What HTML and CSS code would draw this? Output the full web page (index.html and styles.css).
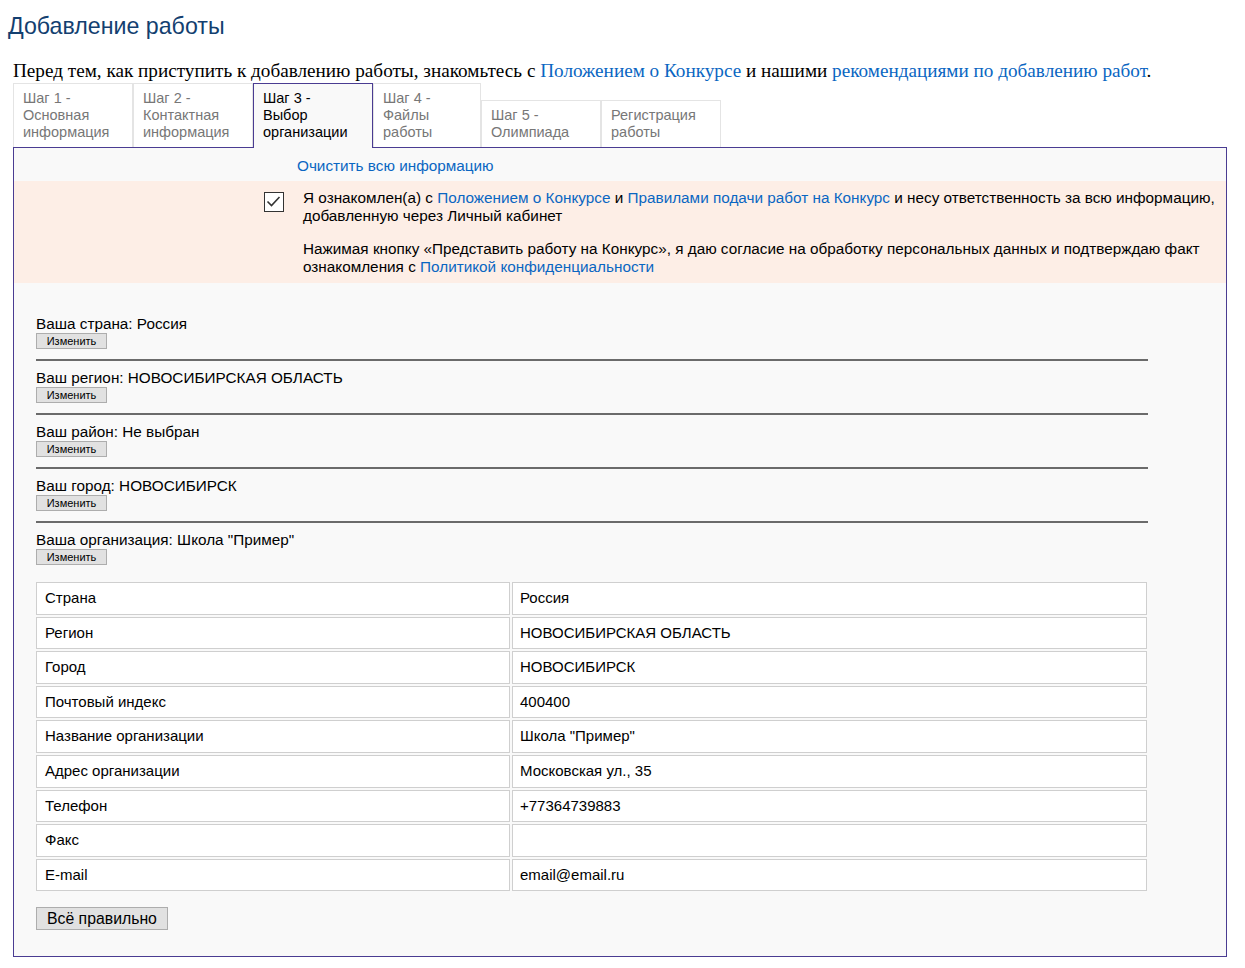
FILE: index.html
```html
<!DOCTYPE html>
<html lang="ru">
<head>
<meta charset="utf-8">
<title>Добавление работы</title>
<link rel="stylesheet" href="styles.css">
</head>
<body>
<h1 class="page-title">Добавление работы</h1>
<p class="intro">Перед тем, как приступить к добавлению работы, знакомьтесь с <a href="#">Положением о Конкурсе</a> и нашими <a href="#">рекомендациями по добавлению работ</a>.</p>
<div class="wizard">
  <ul class="tabs">
    <li class="tab">Шаг 1 -<br>Основная<br>информация</li>
    <li class="tab">Шаг 2 -<br>Контактная<br>информация</li>
    <li class="tab tab-active">Шаг 3 -<br>Выбор<br>организации</li>
    <li class="tab tab-narrow">Шаг 4 -<br>Файлы<br>работы</li>
    <li class="tab">Шаг 5 -<br>Олимпиада</li>
    <li class="tab">Регистрация<br>работы</li>
  </ul>
  <div class="panel">
    <div class="clear-row"><a href="#">Очистить всю информацию</a></div>
    <div class="agree">
      <span class="checkbox"><svg width="18" height="18" viewBox="0 0 18 18"><polyline points="2.5,8.5 6.5,12.5 14.5,4" fill="none" stroke="#333" stroke-width="1.6"/></svg></span>
      <div class="agree-text">
        <p>Я ознакомлен(а) с <a href="#">Положением о Конкурсе</a> и <a href="#">Правилами подачи работ на Конкурс</a> и несу ответственность за всю информацию, добавленную через Личный кабинет</p>
        <p>Нажимая кнопку «Представить работу на Конкурс», я даю согласие на обработку персональных данных и подтверждаю факт ознакомления с <a href="#">Политикой конфиденциальности</a></p>
      </div>
    </div>
    <div class="content">
      <div class="loc-item">
        <div class="loc-label">Ваша страна: Россия</div>
        <button class="btn-change">Изменить</button>
      </div>
      <div class="loc-item">
        <div class="loc-label">Ваш регион: НОВОСИБИРСКАЯ ОБЛАСТЬ</div>
        <button class="btn-change">Изменить</button>
      </div>
      <div class="loc-item">
        <div class="loc-label">Ваш район: Не выбран</div>
        <button class="btn-change">Изменить</button>
      </div>
      <div class="loc-item">
        <div class="loc-label">Ваш город: НОВОСИБИРСК</div>
        <button class="btn-change">Изменить</button>
      </div>
      <div class="loc-item loc-last">
        <div class="loc-label">Ваша организация: Школа "Пример"</div>
        <button class="btn-change">Изменить</button>
      </div>
      <table class="org-table">
        <tr><td class="c1">Страна</td><td class="c2">Россия</td></tr>
        <tr><td class="c1">Регион</td><td class="c2">НОВОСИБИРСКАЯ ОБЛАСТЬ</td></tr>
        <tr><td class="c1">Город</td><td class="c2">НОВОСИБИРСК</td></tr>
        <tr><td class="c1">Почтовый индекс</td><td class="c2">400400</td></tr>
        <tr><td class="c1">Название организации</td><td class="c2">Школа "Пример"</td></tr>
        <tr><td class="c1">Адрес организации</td><td class="c2">Московская ул., 35</td></tr>
        <tr><td class="c1">Телефон</td><td class="c2">+77364739883</td></tr>
        <tr><td class="c1">Факс</td><td class="c2"></td></tr>
        <tr><td class="c1">E-mail</td><td class="c2">email@email.ru</td></tr>
      </table>
      <button class="btn-ok">Всё правильно</button>
    </div>
  </div>
</div>
</body>
</html>
```
FILE: styles.css
```css
html, body {
  margin: 0;
  padding: 0;
  background: #fff;
}
body {
  font-family: "Liberation Sans", Arial, sans-serif;
  color: #000;
}
a {
  color: #0a66c2;
  text-decoration: none;
}
.page-title {
  margin: 12px 0 0 8px;
  font-size: 23.2px;
  line-height: 28px;
  font-weight: normal;
  color: #133f70;
}
.intro {
  margin: 20px 0 2px 13px;
  font-family: "Liberation Serif", "Times New Roman", serif;
  font-size: 19.2px;
  line-height: 21px;
}
.wizard {
  margin-left: 13px;
  width: 1214px;
}
.tabs {
  display: flex;
  align-items: flex-end;
  list-style: none;
  margin: 0;
  padding: 0;
}
.tab {
  box-sizing: border-box;
  width: 120px;
  padding: 6px 9px;
  border: 1px solid #e4e4e4;
  border-bottom: 0;
  background: #fff;
  color: #777;
  font-size: 14.5px;
  line-height: 17px;
}
.tab-narrow {
  width: 108px;
}
.tab-active {
  position: relative;
  border-color: #4a3c92;
  background: #f9f9f9;
  color: #000;
  margin-bottom: -1px;
  padding-bottom: 7px;
}
.panel {
  border: 1px solid #4a3c92;
  background: #f9f9f9;
  font-size: 15.3px;
  line-height: 18px;
}
.clear-row {
  padding: 9px 0 6px 283px;
}
.agree {
  display: flex;
  align-items: flex-start;
  background: #fdeee6;
  padding: 8px 4px 7px 250px;
}
.checkbox {
  flex: none;
  box-sizing: border-box;
  width: 20px;
  height: 20px;
  margin-top: 3px;
  border: 1.5px solid #333;
  background: #fff;
  display: flex;
  align-items: center;
  justify-content: center;
}
.checkbox svg {
  display: block;
}
.agree-text {
  margin-left: 19px;
}
.agree-text p {
  margin: 0;
}
.agree-text p + p {
  margin-top: 15px;
}
.content {
  width: 1112px;
  padding: 32px 0 26px 22px;
}
.loc-item {
  padding-bottom: 10px;
  margin-bottom: 8px;
  border-bottom: 2px solid #6b6b6b;
}
.loc-item.loc-last {
  padding-bottom: 0;
  margin-bottom: 0;
  border-bottom: 0;
}
.loc-label {
  line-height: 18px;
}
.btn-change {
  display: block;
  box-sizing: border-box;
  width: 71px;
  height: 16px;
  padding: 0;
  margin: 0;
  border: 1px solid #adadad;
  background: #e1e1e1;
  font-family: "Liberation Sans", Arial, sans-serif;
  font-size: 11px;
  line-height: 14px;
  color: #000;
}
.org-table {
  margin: 15px 0 0 -2px;
  border-collapse: separate;
  border-spacing: 2px;
  table-layout: fixed;
  width: 1115px;
}
.org-table td {
  border: 1px solid #cfcfcf;
  background: #fff;
  padding: 6px 8px;
  line-height: 18.6px;
  font-size: 15px;
}
.org-table .c1 {
  width: 456px;
}
.org-table .c2 {
  padding-left: 7px;
}
.btn-ok {
  display: block;
  margin-top: 14px;
  box-sizing: border-box;
  height: 23px;
  padding: 0 10px;
  border: 1px solid #adadad;
  background: #e1e1e1;
  font-family: "Liberation Sans", Arial, sans-serif;
  font-size: 15.8px;
  line-height: 19px;
  color: #000;
}
```
